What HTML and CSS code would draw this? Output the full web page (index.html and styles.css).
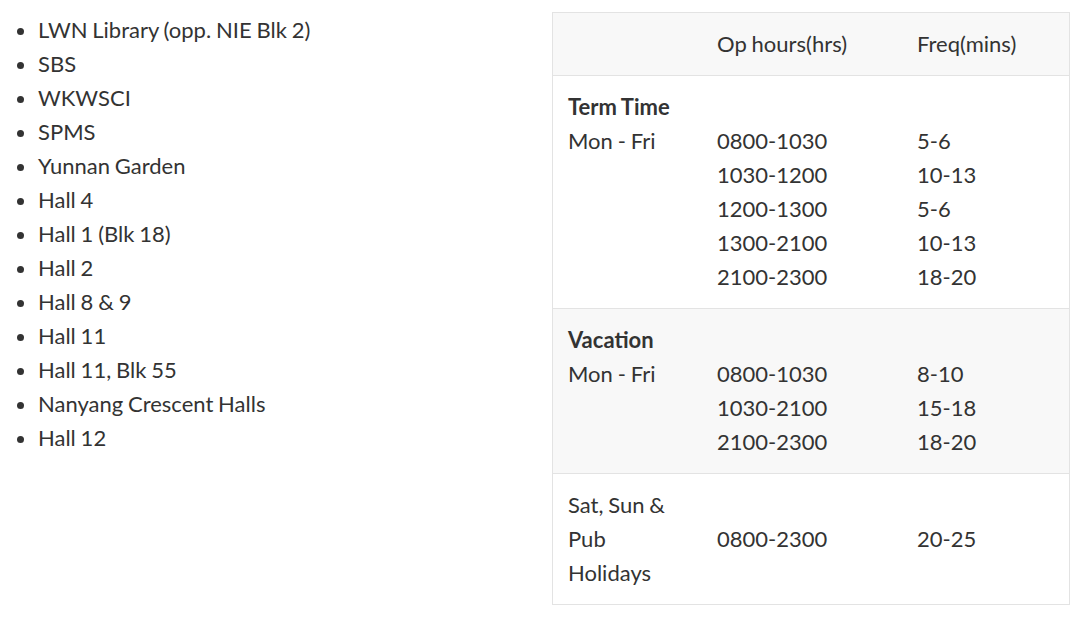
FILE: index.html
```html
<!DOCTYPE html>
<html>
<head>
<meta charset="utf-8">
<link rel="stylesheet" href="styles.css">
</head>
<body>
<div class="page">
  <ul class="stops">
    <li>LWN Library (opp. NIE Blk 2)</li>
    <li>SBS</li>
    <li>WKWSCI</li>
    <li>SPMS</li>
    <li>Yunnan Garden</li>
    <li>Hall 4</li>
    <li>Hall 1 (Blk 18)</li>
    <li>Hall 2</li>
    <li>Hall 8 &amp; 9</li>
    <li>Hall 11</li>
    <li>Hall 11, Blk 55</li>
    <li>Nanyang Crescent Halls</li>
    <li>Hall 12</li>
  </ul>
  <table class="schedule">
    <thead>
      <tr class="shade">
        <th class="c1"></th>
        <th class="c2">Op hours(hrs)</th>
        <th class="c3">Freq(mins)</th>
      </tr>
    </thead>
    <tbody>
      <tr>
        <td><strong>Term Time</strong><br>Mon - Fri</td>
        <td><br>0800-1030<br>1030-1200<br>1200-1300<br>1300-2100<br>2100-2300</td>
        <td><br>5-6<br>10-13<br>5-6<br>10-13<br>18-20</td>
      </tr>
      <tr class="shade">
        <td><strong>Vacation</strong><br>Mon - Fri</td>
        <td><br>0800-1030<br>1030-2100<br>2100-2300</td>
        <td><br>8-10<br>15-18<br>18-20</td>
      </tr>
      <tr>
        <td>Sat, Sun &amp;<br>Pub<br>Holidays</td>
        <td class="mid">0800-2300</td>
        <td class="mid">20-25</td>
      </tr>
    </tbody>
  </table>
</div>
</body>
</html>
```

FILE: styles.css
```css
html, body {
  margin: 0;
  padding: 0;
  background: #ffffff;
}
body {
  font-family: "Lato", "Liberation Sans", sans-serif;
  font-size: 22px;
  line-height: 34px;
  color: #333333;
  word-spacing: -0.8px;
}
.page {
  display: flex;
  align-items: flex-start;
}
.stops {
  margin: 13px 0 0 0;
  padding-left: 38px;
  width: 552px;
  box-sizing: border-box;
}
.schedule {
  margin-top: 12px;
  width: 518px;
  border-collapse: collapse;
  border: 1px solid #e3e3e3;
}
.schedule th {
  font-weight: normal;
  text-align: left;
}
.schedule th, .schedule td {
  padding: 14px 15px;
  vertical-align: top;
  text-align: left;
}
.schedule tr {
  border-bottom: 1px solid #e3e3e3;
}
.schedule td.mid {
  vertical-align: middle;
}
.schedule strong {
  font-weight: 700;
}
.shade {
  background: #f8f8f8;
}
.c1 { width: 119px; }
.c2 { width: 170px; }
```
